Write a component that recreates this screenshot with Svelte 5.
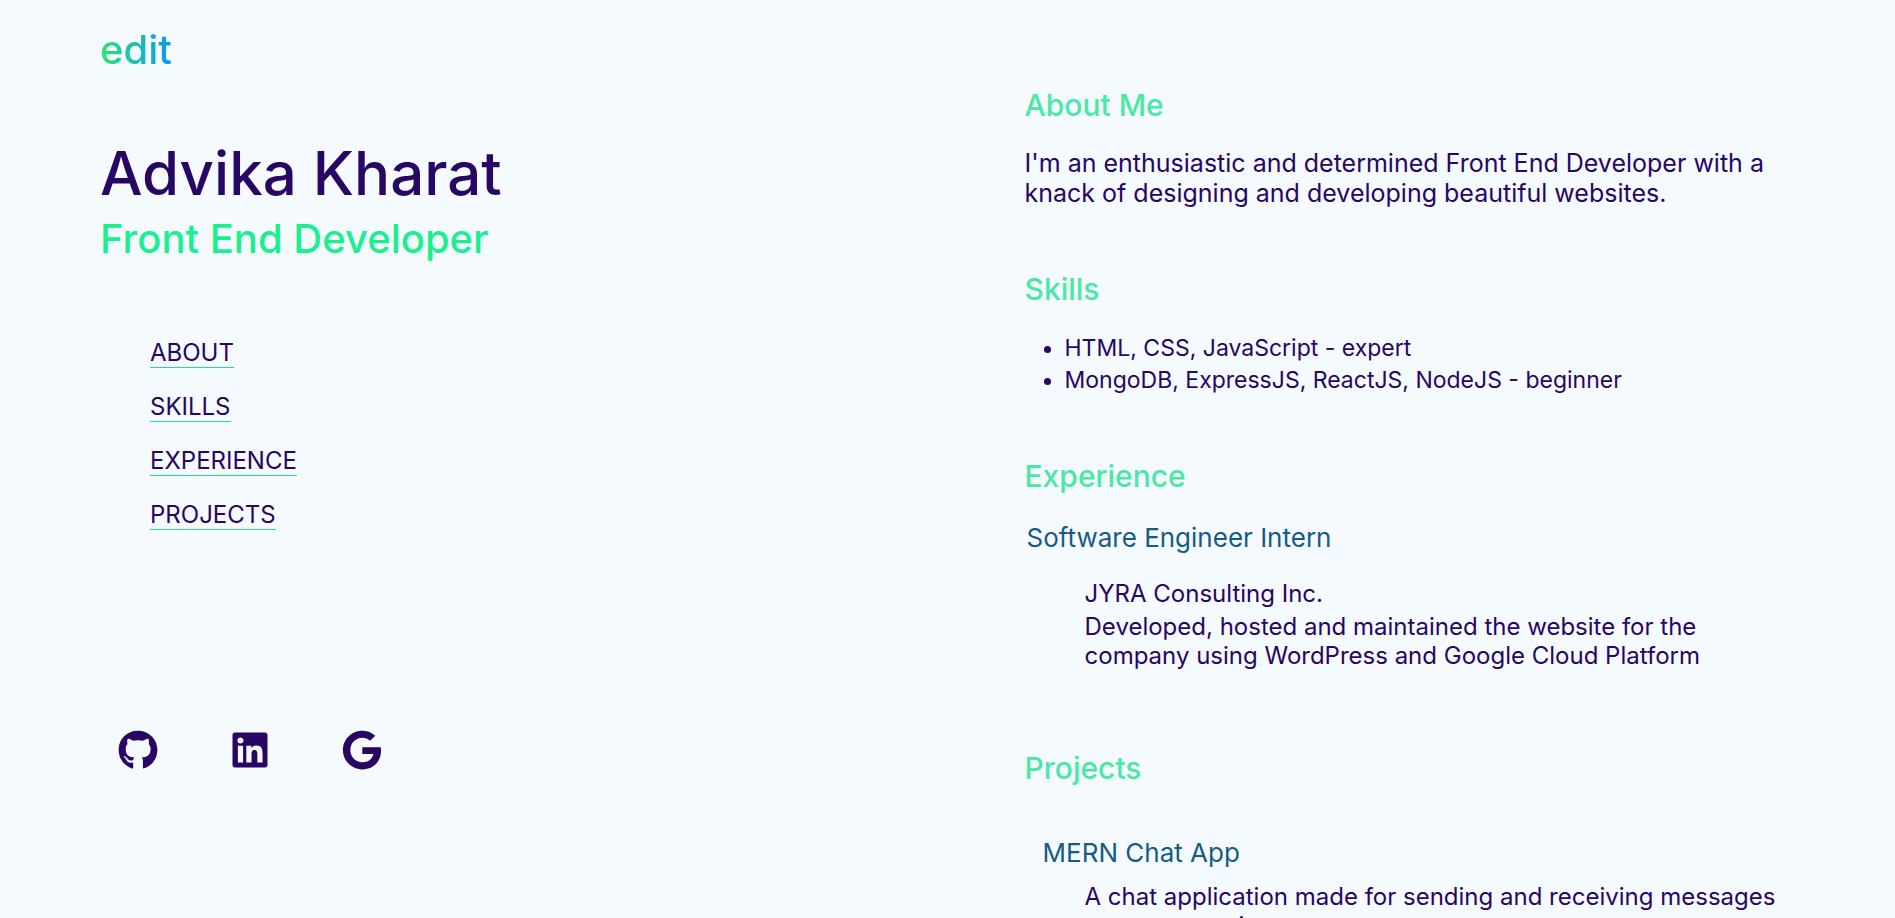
<script>
  const links = ['About', 'Skills', 'Experience', 'Projects'];
  const skills = ['HTML, CSS, JavaScript - expert', 'MongoDB, ExpressJS, ReactJS, NodeJS - beginner'];
  const socials = [
    { name: 'GitHub', box: '-8 0 512 512', d: 'M165.9 397.4c0 2-2.3 3.6-5.2 3.6-3.3.3-5.6-1.3-5.6-3.6 0-2 2.3-3.6 5.2-3.6 3-.3 5.6 1.3 5.6 3.6zM244.8 8C106.1 8 0 113.3 0 252c0 110.9 69.8 205.8 169.5 239.2 12.8 2.3 17.3-5.6 17.3-12.1 0-6.2-.3-40.4-.3-61.4 0 0-70 15-84.7-29.8 0 0-11.4-29.1-27.8-36.6 0 0-22.9-15.7 1.6-15.4 0 0 24.9 2 38.6 25.8 21.9 38.6 58.6 27.5 72.9 20.9 2.3-16 8.8-27.1 16-33.7-55.9-6.2-112.3-14.3-112.3-110.5 0-27.5 7.6-41.3 23.6-58.9-2.6-6.5-11.1-33.3 2.6-67.9 20.9-6.5 69 27 69 27 20-5.6 41.5-8.5 62.8-8.5s42.8 2.9 62.8 8.5c0 0 48.1-33.6 69-27 13.7 34.7 5.2 61.4 2.6 67.9 16 17.7 25.8 31.5 25.8 58.9 0 96.5-58.9 104.2-114.8 110.5 9.2 7.9 17 22.9 17 46.4 0 33.7-.3 75.4-.3 83.6 0 6.5 4.6 14.4 17.3 12.1C428.2 457.8 496 362.9 496 252 496 113.3 383.5 8 244.8 8zM97.2 352.9c-1.3 1-1 3.3.7 5.2 1.6 1.6 3.9 2.3 5.2 1 1.3-1 1-3.3-.7-5.2-1.6-1.6-3.9-2.3-5.2-1zm-10.8-8.1c-.7 1.3.3 2.9 2.3 3.9 1.6 1 3.6.7 4.3-.7.7-1.3-.3-2.9-2.3-3.9-2-.6-3.6-.3-4.3.7zm32.4 35.6c-1.6 1.3-1 4.3 1.3 6.2 2.3 2.3 5.2 2.6 6.5 1 1.3-1.3.7-4.3-1.3-6.2-2.2-2.3-5.2-2.6-6.5-1zm-11.4-14.7c-1.6 1-1.6 3.6 0 5.9 1.6 2.3 4.3 3.3 5.6 2.3 1.6-1.3 1.6-3.9 0-6.2-1.4-2.3-4-3.3-5.6-2z' },
    { name: 'LinkedIn', box: '-32 0 512 512', d: 'M416 32H31.9C14.3 32 0 46.5 0 64.3v383.4C0 465.5 14.3 480 31.9 480H416c17.6 0 32-14.5 32-32.3V64.3c0-17.8-14.4-32.3-32-32.3zM135.4 416H69V202.2h66.5V416zm-33.2-243c-21.3 0-38.5-17.3-38.5-38.5S80.9 96 102.2 96c21.2 0 38.5 17.3 38.5 38.5 0 21.3-17.2 38.5-38.5 38.5zm282.1 243h-66.4V312c0-24.8-.5-56.7-34.5-56.7-34.6 0-39.9 27-39.9 54.9V416h-66.4V202.2h63.7v29.2h.9c8.9-16.8 30.6-34.5 62.9-34.5 67.2 0 79.7 44.3 79.7 101.9V416z' },
    { name: 'Google', box: '-12 0 512 512', d: 'M488 261.8C488 403.3 391.1 504 248 504 110.8 504 0 393.2 0 256S110.8 8 248 8c66.8 0 123 24.5 166.3 64.9l-67.5 64.9C258.5 52.6 94.3 116.6 94.3 256c0 86.5 69.1 156.6 153.7 156.6 98.2 0 135-70.4 140.8-106.9H248v-85.3h236.1c2.3 12.7 3.9 24.9 3.9 41.4z' }
  ];
</script>

<main>
  <div class="profile">
    <a class="edit" href="#edit">edit</a>
    <h1>Advika Kharat</h1>
    <p class="role">Front End Developer</p>
    <nav>
      {#each links as link}
        <a href={'#' + link.toLowerCase()}>{link}</a>
      {/each}
    </nav>
    <div class="socials">
      {#each socials as s}
        <a href={'#' + s.name.toLowerCase()} aria-label={s.name}>
          <svg viewBox={s.box} aria-hidden="true"><path d={s.d} /></svg>
        </a>
      {/each}
    </div>
  </div>

  <div class="details">
    <section id="about">
      <h2>About Me</h2>
      <p class="intro">I'm an enthusiastic and determined Front End Developer with a knack of designing and developing beautiful websites.</p>
    </section>
    <section id="skills">
      <h2>Skills</h2>
      <ul>
        {#each skills as skill}
          <li>{skill}</li>
        {/each}
      </ul>
    </section>
    <section id="experience">
      <h2>Experience</h2>
      <h3>Software Engineer Intern</h3>
      <div class="entry">
        <p class="company">JYRA Consulting Inc.</p>
        <p>Developed, hosted and maintained the website for the company using WordPress and Google Cloud Platform</p>
      </div>
    </section>
    <section id="projects">
      <h2>Projects</h2>
      <h3>MERN Chat App</h3>
      <div class="entry">
        <p>A chat application made for sending and receiving messages among users in groups</p>
      </div>
    </section>
  </div>
</main>

<style>
  :global(body) {
    margin: 0;
    background: #f5faff;
  }
  main {
    box-sizing: border-box;
    display: grid;
    grid-template-columns: 6fr 5fr;
    height: 100vh;
    overflow: hidden;
    padding: 0 100px;
    font-family: Inter, sans-serif;
    color: #270664;
  }
  h1, h2, h3, p, ul {
    margin: 0;
    font-weight: 400;
  }
  h1, h2, .edit, .role {
    font-weight: 500;
  }
  a {
    color: inherit;
    text-decoration: none;
  }
  .profile {
    display: flex;
    flex-direction: column;
    align-items: flex-start;
    padding-top: 26px;
  }
  .edit {
    font-size: 40px;
    line-height: 48px;
    color: transparent;
    background: linear-gradient(to right, #2ee56f, #0e95f5);
    background-clip: text;
  }
  h1 {
    margin-top: 63px;
    font-size: 60px;
    line-height: 72px;
  }
  .role {
    margin-top: 6px;
    font-size: 40px;
    line-height: 48px;
    color: #1af08e;
  }
  nav {
    display: flex;
    flex-direction: column;
    align-items: flex-start;
    gap: 24px;
    margin: 75px 0 0 50px;
  }
  nav a {
    border-bottom: 1px solid #1fe28f;
    font-size: 24px;
    line-height: 29px;
    text-transform: uppercase;
  }
  .socials {
    display: flex;
    gap: 72px;
    margin: 200px 0 0 18px;
  }
  .socials a {
    display: block;
    width: 40px;
    height: 40px;
  }
  svg {
    display: block;
    width: 40px;
    height: 40px;
    fill: currentColor;
  }
  .details {
    padding-top: 87px;
  }
  h2 {
    font-size: 30px;
    line-height: 36px;
    color: #4ae8a4;
  }
  .intro {
    margin-top: 25px;
    font-size: 25px;
    line-height: 30px;
  }
  #skills {
    margin-top: 63px;
  }
  ul {
    margin-top: 25px;
    padding-left: 40px;
    font-size: 23px;
    line-height: 32px;
  }
  #experience {
    margin-top: 62px;
  }
  h3 {
    font-size: 26px;
    line-height: 32px;
    color: #175a86;
  }
  #experience h3 {
    margin: 28px 0 0 2px;
  }
  .entry {
    padding-left: 60px;
    font-size: 24px;
    line-height: 29px;
  }
  #experience .entry {
    margin-top: 25px;
  }
  .company {
    margin-bottom: 4px;
  }
  #projects {
    margin-top: 80px;
  }
  #projects h3 {
    margin: 51px 0 0 18px;
  }
  #projects .entry {
    margin-top: 13px;
  }
</style>
